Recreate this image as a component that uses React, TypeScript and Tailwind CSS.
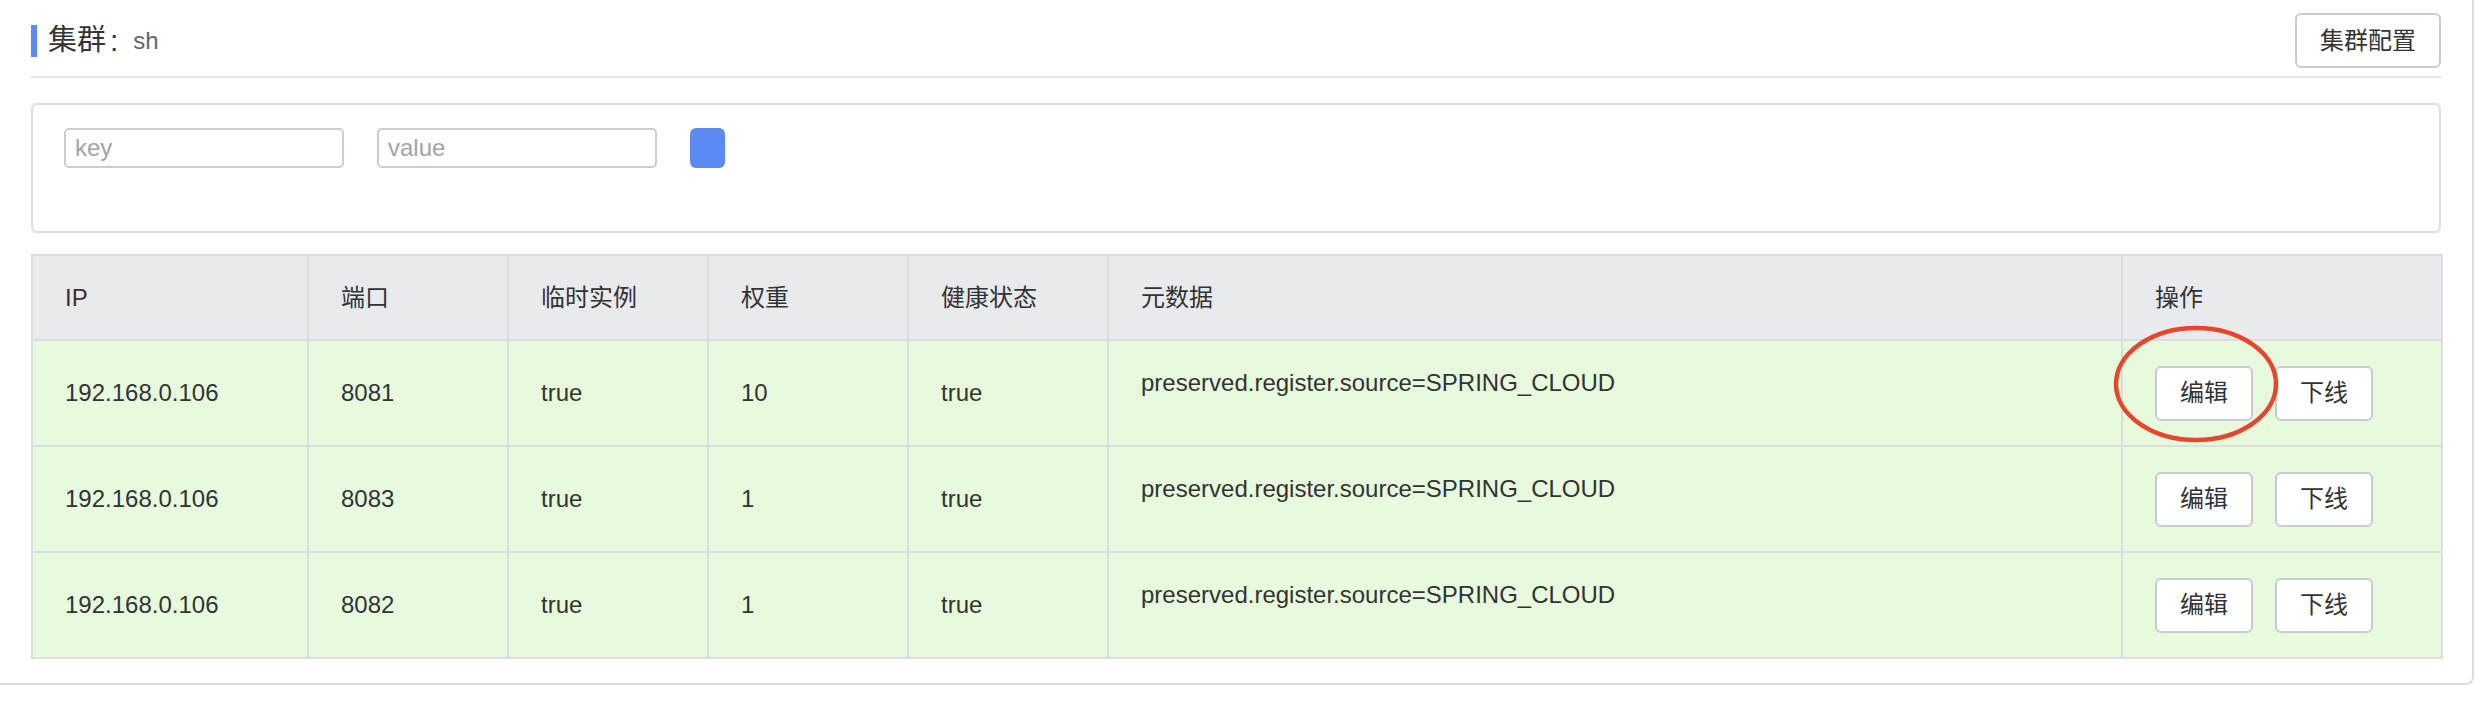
import React from 'react';

interface Instance {
  ip: string;
  port: number;
  ephemeral: boolean;
  weight: number;
  healthy: boolean;
  metadata: string;
}

const instances: Instance[] = [
  { ip: '192.168.0.106', port: 8081, ephemeral: true, weight: 10, healthy: true, metadata: 'preserved.register.source=SPRING_CLOUD' },
  { ip: '192.168.0.106', port: 8083, ephemeral: true, weight: 1, healthy: true, metadata: 'preserved.register.source=SPRING_CLOUD' },
  { ip: '192.168.0.106', port: 8082, ephemeral: true, weight: 1, healthy: true, metadata: 'preserved.register.source=SPRING_CLOUD' },
];

const columns = [
  { label: 'IP', width: 'w-[276px]' },
  { label: '端口', width: 'w-[200px]' },
  { label: '临时实例', width: 'w-[200px]' },
  { label: '权重', width: 'w-[200px]' },
  { label: '健康状态', width: 'w-[200px]' },
  { label: '元数据', width: 'w-[1014px]' },
  { label: '操作', width: 'w-[320px]' },
];

const cell = 'border-2 border-[#dcdde1] pl-[32px] align-middle';

function OutlineButton({ children, className = '' }: { children: React.ReactNode; className?: string }) {
  return (
    <button className={`h-[55px] bg-white border-2 border-[#c8cbd1] rounded-[6px] text-[24px] text-[#333] ${className}`}>
      {children}
    </button>
  );
}

export default function App() {
  return (
    <div className="min-h-screen bg-white font-['Liberation_Sans','Noto_Sans_CJK_SC',sans-serif] text-[#333]">
      <div className="w-[2474px] h-[685px] border-r-2 border-b-2 border-[#dddddd] rounded-br-[8px] pl-[31px] pr-[31px] pt-[13px]">

        {/* title bar */}
        <div className="flex items-center justify-between h-[55px]">
          <div className="flex items-center">
            <span className="w-[6px] h-[32px] bg-[#5b8af5]" />
            <span className="ml-[11px] text-[29px] leading-none text-[#333]">集群</span>
            <span className="ml-[4px] text-[30px] leading-none text-[#333]">:</span>
            <span className="ml-[15px] text-[24px] leading-none text-[#666]">sh</span>
          </div>
          <OutlineButton className="w-[146px]">集群配置</OutlineButton>
        </div>
        <div className="mt-[8px] h-[2px] bg-[#e4e5e9]" />

        {/* filter */}
        <div className="mt-[25px] h-[130px] border-2 border-[#dddee2] rounded-[6px] pt-[23px] pl-[31px] flex items-start gap-[33px]">
          <input
            placeholder="key"
            className="w-[280px] h-[40px] border-2 border-[#c9ccd1] rounded-[5px] pl-[9px] text-[24px] outline-none placeholder:text-[#a3a3a3]"
          />
          <input
            placeholder="value"
            className="w-[280px] h-[40px] border-2 border-[#c9ccd1] rounded-[5px] pl-[9px] text-[24px] outline-none placeholder:text-[#a3a3a3]"
          />
          <button className="w-[35px] h-[40px] rounded-[6px] bg-[#5b8af5]" />
        </div>

        {/* instances */}
        <table className="mt-[21px] w-[2410px] border-collapse table-fixed text-[24px]">
          <thead>
            <tr className="h-[85px] bg-[#e9eaee]">
              {columns.map(c => (
                <th key={c.label} className={`${cell} ${c.width} text-left font-normal`}>{c.label}</th>
              ))}
            </tr>
          </thead>
          <tbody>
            {instances.map((inst, i) => (
              <tr key={inst.port} className="h-[106px] bg-[#e7fadd]">
                <td className={cell}>{inst.ip}</td>
                <td className={cell}>{inst.port}</td>
                <td className={cell}>{String(inst.ephemeral)}</td>
                <td className={cell}>{inst.weight}</td>
                <td className={cell}>{String(inst.healthy)}</td>
                <td className="border-2 border-[#dcdde1] pl-[32px] align-top pt-[24px] leading-[36px]">{inst.metadata}</td>
                <td className={`${cell} relative`}>
                  <div className="flex gap-[22px]">
                    <OutlineButton className="w-[98px]">编辑</OutlineButton>
                    <OutlineButton className="w-[98px]">下线</OutlineButton>
                  </div>
                  {i === 0 && (
                    <svg className="absolute left-[-10px] top-[-16px] w-[166px] h-[118px] pointer-events-none" viewBox="0 0 166 118">
                      <ellipse cx="83" cy="59" rx="80" ry="56" fill="none" stroke="#e8462b" strokeWidth="4.5" />
                    </svg>
                  )}
                </td>
              </tr>
            ))}
          </tbody>
        </table>

      </div>
    </div>
  );
}
